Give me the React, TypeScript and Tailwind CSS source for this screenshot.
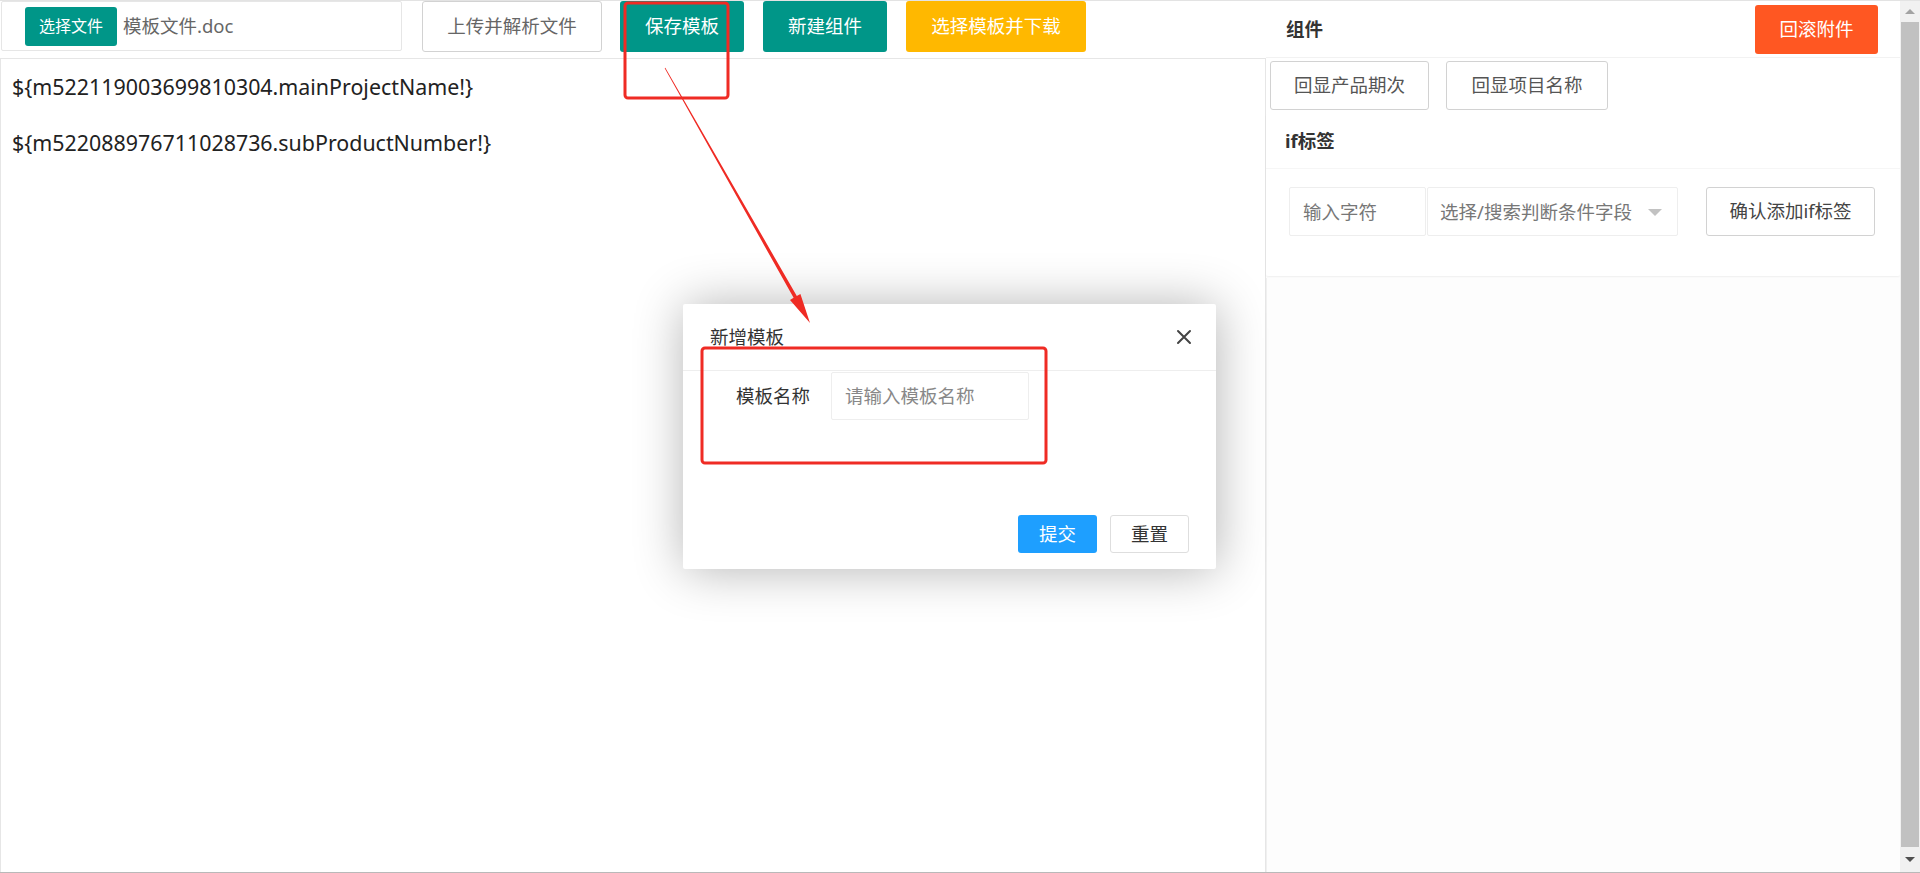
import React from "react";

function Btn({ className, children }: { className: string; children: React.ReactNode }) {
  return (
    <div className={`flex items-center justify-center rounded-[3px] text-[18.5px] leading-none ${className}`}>
      {children}
    </div>
  );
}

export default function App() {
  return (
    <div className="relative w-[1920px] h-[873px] overflow-hidden bg-white flex border-t border-b border-t-[#e3e3e3] border-b-[#b9b9b9] font-['Noto_Sans','Noto_Sans_CJK_SC',sans-serif] text-[#333]">
      {/* left column */}
      <div className="w-[1266px] flex flex-col">
        <div className="h-[57px] flex items-start shrink-0">
          <div className="ml-px w-[401px] h-[50px] border border-[#e6e6e6] rounded-[2px] flex items-center pl-[23px]">
            <div className="w-[92px] h-[39px] bg-[#009688] rounded-[3px] text-white text-[16px] flex items-center justify-center">选择文件</div>
            <span className="ml-[6px] text-[18.5px] text-[#666]">模板文件.doc</span>
          </div>
          <Btn className="ml-[20px] w-[180px] h-[51px] border border-[#d2d2d2] text-[#666] bg-white">上传并解析文件</Btn>
          <Btn className="ml-[18px] w-[124px] h-[51px] bg-[#009688] text-white">保存模板</Btn>
          <Btn className="ml-[19px] w-[124px] h-[51px] bg-[#009688] text-white">新建组件</Btn>
          <Btn className="ml-[19px] w-[180px] h-[51px] bg-[#FFB800] text-white">选择模板并下载</Btn>
        </div>
        <div className="flex-1 border-l border-t border-r border-[#e6e6e6] pl-[11px] text-[21.4px] text-[#222]">
          <div className="leading-[56px]">{"${m522119003699810304.mainProjectName!}"}</div>
          <div className="leading-[56px]">{"${m522088976711028736.subProductNumber!}"}</div>
        </div>
      </div>

      {/* right column */}
      <div className="w-[634px] flex flex-col bg-[#fdfdfd]">
        <div className="h-[57px] shrink-0 bg-white border-b border-[#f2f2f2] flex items-center justify-between pl-[20px] pr-[22px]">
          <span className="text-[18.5px] font-bold text-[#333]">组件</span>
          <Btn className="w-[123px] h-[49px] bg-[#FF5722] text-white">回滚附件</Btn>
        </div>
        <div className="bg-white">
          <div className="pt-[3px] pl-[4px] flex gap-[17px]">
            <Btn className="w-[159px] h-[49px] border border-[#d2d2d2] text-[#555] bg-white">回显产品期次</Btn>
            <Btn className="w-[162px] h-[49px] border border-[#d2d2d2] text-[#555] bg-white">回显项目名称</Btn>
          </div>
        </div>
        <div className="pt-[4px] bg-white">
          <div className="bg-white rounded-[2px] shadow-[0_1px_2px_rgba(0,0,0,0.06)]">
            <div className="h-[55px] border-b border-[#f6f6f6] pl-[19px] flex items-center text-[18.5px] font-bold text-[#333]">if标签</div>
            <div className="pt-[18px] pb-[40px] pl-[23px] flex items-center">
              <div className="w-[137px] h-[49px] border border-[#eeeeee] rounded-[2px] flex items-center pl-[13px] text-[18.5px] text-[#777]">输入字符</div>
              <div className="ml-px relative w-[251px] h-[49px] border border-[#eeeeee] rounded-[2px] flex items-center pl-[12px] text-[18.5px] text-[#777]">
                选择/搜索判断条件字段
                <div className="absolute right-[15px] top-[21px] w-0 h-0 border-l-[7px] border-r-[7px] border-t-[7px] border-l-transparent border-r-transparent border-t-[#c2c2c2]"></div>
              </div>
              <Btn className="ml-[28px] w-[169px] h-[49px] border border-[#d2d2d2] text-[#444] bg-white">确认添加if标签</Btn>
            </div>
          </div>
        </div>
        <div className="flex-1 border-l border-[#f0f0f0] mt-[2px]"></div>
      </div>

      {/* scrollbar */}
      <div className="w-[20px] bg-[#f1f1f1] flex flex-col items-center">
        <div className="h-[21px] flex items-center justify-center">
          <div className="w-0 h-0 border-l-[5px] border-r-[5px] border-b-[5px] border-l-transparent border-r-transparent border-b-[#a3a3a3]"></div>
        </div>
        <div className="flex-1 w-[18px] bg-[#c1c1c1]"></div>
        <div className="h-[25px] flex items-center justify-center">
          <div className="w-0 h-0 border-l-[5px] border-r-[5px] border-t-[5px] border-l-transparent border-r-transparent border-t-[#505050]"></div>
        </div>
      </div>

      {/* modal */}
      <div className="absolute left-[683px] top-[303px] w-[533px] h-[265px] bg-white rounded-[2px] shadow-[1px_1px_50px_rgba(0,0,0,0.3)] flex flex-col">
        <div className="h-[67px] shrink-0 border-b border-[#eeeeee] flex items-center justify-between pl-[27px] pr-[24px]">
          <span className="text-[18.5px] text-[#333]">新增模板</span>
          <svg width="16" height="16" viewBox="0 0 16 16" className="mr-[0px]">
            <path d="M2 2 L14 14 M14 2 L2 14" stroke="#444" strokeWidth="2" strokeLinecap="round" />
          </svg>
        </div>
        <div className="pt-[1px] flex items-center">
          <div className="w-[127px] text-right text-[18.5px] text-[#333]">模板名称</div>
          <div className="ml-[21px] w-[198px] h-[48px] border border-[#eeeeee] rounded-[2px] flex items-center pl-[13px] text-[18.5px] text-[#888]">请输入模板名称</div>
        </div>
        <div className="flex-1"></div>
        <div className="flex justify-end gap-[13px] pr-[27px] pb-[16px]">
          <Btn className="w-[79px] h-[38px] bg-[#1E9FFF] text-white rounded-[2px]">提交</Btn>
          <Btn className="w-[79px] h-[38px] border border-[#dedede] text-[#333] bg-white rounded-[2px]">重置</Btn>
        </div>
      </div>

      {/* annotations */}
      <svg className="absolute left-0 top-[-1px] pointer-events-none" width="1920" height="873" viewBox="0 0 1920 873">
        <rect x="625" y="3" width="103" height="95" rx="3" fill="none" stroke="#ef2b24" strokeWidth="3" />
        <rect x="702" y="348" width="344" height="115" rx="3" fill="none" stroke="#ef2b24" strokeWidth="3" />
        <polygon
          points="664.7,68.2 793.6,297.8 790.0,299.9 810,323 800.4,293.9 796.8,296.0 665.3,67.8"
          fill="#ef2b24"
        />
      </svg>
    </div>
  );
}
